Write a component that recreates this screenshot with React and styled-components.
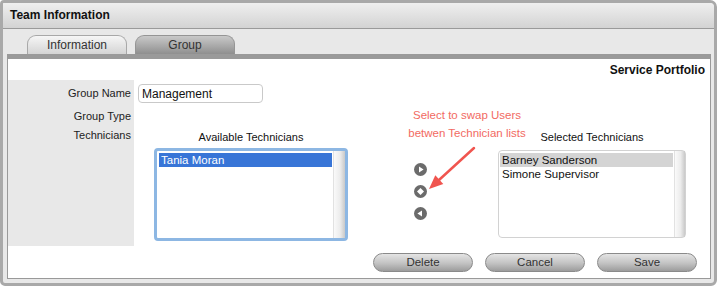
import React from "react";
import styled, { createGlobalStyle } from "styled-components";

const Global = createGlobalStyle`
  html, body { margin: 0; padding: 0; background: #fff; }
  body { font-family: "Liberation Sans", Arial, sans-serif; }
  * { box-sizing: border-box; }
`;

const Frame = styled.div`
  width: 717px;
  height: 286px;
  border: 3px solid #a9a9a9;
  border-radius: 4px 7px 6px 5px;
  background: #e8e8e8;
  display: flex;
  flex-direction: column;
  overflow: hidden;
`;

const Header = styled.div`
  height: 26px;
  flex: none;
  padding-left: 7px;
  line-height: 25px;
  font-weight: bold;
  font-size: 12px;
  color: #111;
  border-bottom: 1px solid #9a9a9a;
  background: linear-gradient(#efefef, #d3d3d3);
`;

const TabBar = styled.div`
  height: 25px;
  flex: none;
  display: flex;
  align-items: flex-end;
  gap: 8px;
  padding-left: 24px;
`;

const Tab = styled.div`
  width: 100px;
  height: 19px;
  line-height: 19px;
  text-align: center;
  font-size: 12px;
  color: #333;
  border: 1px solid ${(p) => (p.$active ? "#a8a8a8" : "#959595")};
  border-bottom: none;
  border-radius: 9px 9px 0 0;
  background: ${(p) =>
    p.$active
      ? "linear-gradient(#f6f6f6, #d4d4d4)"
      : "linear-gradient(#c9c9c9, #8f8f8f)"};
`;

const Body = styled.div`
  flex: 1;
  padding: 0 3px 4px 4px;
  display: flex;
`;

const Panel = styled.div`
  flex: 1;
  background: #fff;
  border: 1px solid #999;
  border-top: 5px solid #9a9a9a;
  display: flex;
  flex-direction: column;
`;

const PanelTitle = styled.div`
  height: 21px;
  padding: 2px 5px 0 0;
  line-height: 19px;
  text-align: right;
  font-weight: bold;
  font-size: 12px;
  color: #111;
`;

const Form = styled.div`
  display: grid;
  grid-template-columns: 126px 1fr;
  grid-template-rows: 26px 20px 120px;
`;

const Label = styled.div`
  background: #e8e8e8;
  text-align: right;
  padding-right: 3px;
  padding-top: ${(p) => p.$top || 0}px;
  line-height: ${(p) => p.$lh}px;
  font-size: 11px;
  color: #222;
`;

const Cell = styled.div`
  padding: ${(p) => p.$pad || "0"};
  position: relative;
`;

const TextInput = styled.input`
  width: 125px;
  height: 19px;
  border: 1px solid #c9c9c9;
  border-radius: 4px;
  padding: 0 3px;
  font-family: "Liberation Sans", Arial, sans-serif;
  font-size: 12px;
  color: #111;
  outline: none;
  display: block;
`;

const Widget = styled.div`
  position: relative;
  display: flex;
  padding-left: 20px;
  height: 100%;
`;

const ListCol = styled.div`
  width: ${(p) => p.$w}px;
  display: flex;
  flex-direction: column;
  align-items: center;
  margin-left: ${(p) => p.$ml || 0}px;
`;

const ListLabel = styled.div`
  padding-top: 5px;
  line-height: 13px;
  font-size: 11px;
  color: #111;
`;

const ListBox = styled.div`
  width: 100%;
  height: ${(p) => p.$h}px;
  margin-top: ${(p) => p.$mt}px;
  border: ${(p) => (p.$focused ? "3px solid #8db7e3" : "1px solid #d2d2d2")};
  border-radius: 4px;
  display: flex;
  background: #fff;
`;

const Items = styled.div`
  flex: 1;
  padding: 2px 1px 0 ${(p) => p.$pl}px;
`;

const Item = styled.div`
  height: 14px;
  line-height: 14px;
  padding-left: 2px;
  font-size: 11.5px;
  color: ${(p) => (p.$sel === "blue" ? "#fff" : "#111")};
  background: ${(p) =>
    p.$sel === "blue" ? "#3875d7" : p.$sel === "gray" ? "#d4d4d4" : "transparent"};
`;

const Scroll = styled.div`
  width: ${(p) => p.$w}px;
  border-left: 1px solid #e2e2e2;
  background: linear-gradient(to right, #fafafa, #ececec 55%, #c9c9c9);
`;

const Mover = styled.div`
  width: 13px;
  margin-left: 66px;
  padding-top: 37px;
  display: flex;
  flex-direction: column;
  gap: 9px;
`;

const Note = styled.div`
  position: absolute;
  left: 253px;
  top: -20px;
  width: 160px;
  text-align: center;
  font-size: 11.5px;
  line-height: 18px;
  color: #f26a62;
`;

const Arrow = styled.svg`
  position: absolute;
  left: 286px;
  top: 14px;
`;

const Buttons = styled.div`
  display: flex;
  justify-content: flex-end;
  gap: 12px;
  padding: 7px 13px 0 0;
`;

const Button = styled.button`
  width: 100px;
  height: 19px;
  border: 1px solid #8a8a8a;
  border-radius: 10px;
  background: linear-gradient(#e4e4e4, #c2c2c2 55%, #9c9c9c);
  font-family: "Liberation Sans", Arial, sans-serif;
  font-size: 11.5px;
  color: #333;
  padding: 0;
  line-height: 17px;
`;

const Circle = ({ children }) => (
  <svg width="13" height="13" viewBox="0 0 13 13">
    <circle cx="6.5" cy="6.5" r="6.5" fill="#6b6b6b" />
    {children}
  </svg>
);

export default function App() {
  return (
    <>
      <Global />
      <Frame>
        <Header>Team Information</Header>
        <TabBar>
          <Tab $active>Information</Tab>
          <Tab>Group</Tab>
        </TabBar>
        <Body>
          <Panel>
            <PanelTitle>Service Portfolio</PanelTitle>
            <Form>
              <Label $lh={26}>Group Name</Label>
              <Cell $pad="4px 0 0 4px">
                <TextInput defaultValue="Management" />
              </Cell>
              <Label $lh={20}>Group Type</Label>
              <Cell />
              <Label $lh={16} $top={1}>Technicians</Label>
              <Cell>
                <Widget>
                  <ListCol $w={194}>
                    <ListLabel>Available Technicians</ListLabel>
                    <ListBox $h={93} $mt={4} $focused>
                      <Items $pl={2}>
                        <Item $sel="blue">Tania Moran</Item>
                      </Items>
                      <Scroll $w={12} />
                    </ListBox>
                  </ListCol>
                  <Mover>
                    <Circle>
                      <polygon points="5,3.6 9.6,6.5 5,9.4" fill="#fff" />
                    </Circle>
                    <Circle>
                      <polygon points="6.5,3 10,6.5 6.5,10 3,6.5" fill="#fff" />
                    </Circle>
                    <Circle>
                      <polygon points="8,3.6 3.4,6.5 8,9.4" fill="#fff" />
                    </Circle>
                  </Mover>
                  <ListCol $w={188} $ml={71}>
                    <ListLabel>Selected Technicians</ListLabel>
                    <ListBox $h={88} $mt={6}>
                      <Items $pl={1}>
                        <Item $sel="gray">Barney Sanderson</Item>
                        <Item>Simone Supervisor</Item>
                      </Items>
                      <Scroll $w={11} />
                    </ListBox>
                  </ListCol>
                  <Note>
                    Select to swap Users
                    <br />
                    betwen Technician lists
                  </Note>
                  <Arrow width="60" height="56" viewBox="0 0 60 56">
                    <line x1="54" y1="8" x2="19" y2="40" stroke="#f0554f" strokeWidth="2.5" strokeLinecap="round" />
                    <polygon points="9,49 15.3,35.2 23.3,44" fill="#f0554f" />
                  </Arrow>
                </Widget>
              </Cell>
            </Form>
            <Buttons>
              <Button>Delete</Button>
              <Button>Cancel</Button>
              <Button>Save</Button>
            </Buttons>
          </Panel>
        </Body>
      </Frame>
    </>
  );
}
